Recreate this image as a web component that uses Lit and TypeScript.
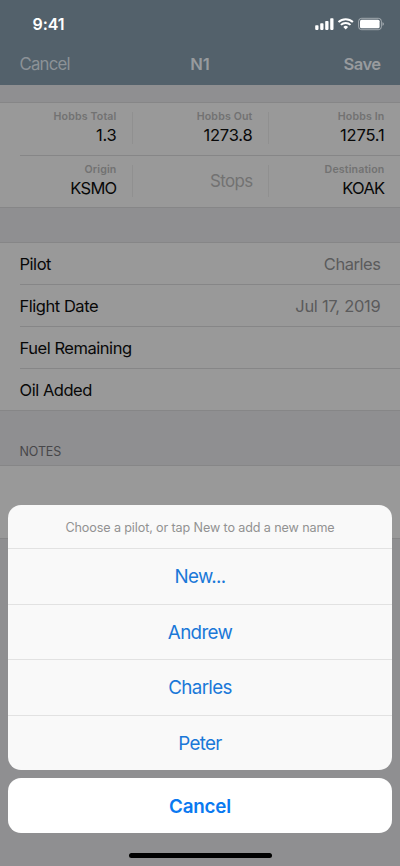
import { LitElement, html, css, svg } from "lit";
import { customElement } from "lit/decorators.js";

interface Field { label: string; value: string; cls: string }

const ROWS: Field[][] = [
  [
    { label: "Hobbs Total", value: "1.3", cls: "" },
    { label: "Hobbs Out", value: "1273.8", cls: "" },
    { label: "Hobbs In", value: "1275.1", cls: "" },
  ],
  [
    { label: "Origin", value: "KSMO", cls: "code" },
    { label: "", value: "Stops", cls: "" },
    { label: "Destination", value: "KOAK", cls: "code" },
  ],
];

const DETAILS = [
  { label: "Pilot", value: "Charles" },
  { label: "Flight Date", value: "Jul 17, 2019" },
  { label: "Fuel Remaining", value: "" },
  { label: "Oil Added", value: "" },
];

@customElement("status-bar")
class StatusBar extends LitElement {
  static styles = css`
    :host { display: flex; justify-content: space-between; height: 42px; color: #fff; }
    .time { margin: 13px 0 0 32.5px; font-size: 16px; line-height: 22px; font-weight: 600; letter-spacing: -0.1px; }
    svg { display: block; margin: 17px 15px 0 0; }
  `;
  render() {
    return html`
      <span class="time">9:41</span>
      <svg width="70" height="14" viewBox="0 0 70 14" fill="#fff">
        ${[[0, 8.2], [5, 6.2], [10, 4], [15, 1.3]].map(
          ([x, y]) => svg`<rect x=${x + 0.2} y=${y} width="3.3" height=${12.9 - y} rx="0.8" />`,
        )}
        <path d="M30.7 12.5L28.3 10a3.500 3.500 0 0 1 4.800 0z" />
        <path d="M25.900 7.900a6.900 6.900 0 0 1 9.600 0M23.500 5a10.500 10.500 0 0 1 14.400 0" fill="none" stroke="#fff" stroke-width="2" />
        <rect x="43.600" y="1.300" width="22.800" height="11.400" rx="3" fill="none" stroke="#fff" stroke-opacity=".45" />
        <rect x="45" y="2.800" width="19.600" height="8.400" rx="1.500" />
        <path d="M67.500 5.200c.9.300 1.300 1 1.300 1.800s-.4 1.500-1.300 1.800z" fill-opacity=".5" />
      </svg>
    `;
  }
}

@customElement("action-sheet")
class ActionSheet extends LitElement {
  static styles = css`
    :host { display: flex; flex-direction: column; align-items: center; gap: 8px; padding: 0 8px; }
    .group, .cancel { align-self: stretch; border-radius: 13px; box-sizing: border-box; }
    .group { height: 265px; background: #f9f9f9; display: flex; flex-direction: column; overflow: hidden; }
    .title { flex: 0 0 43px; box-sizing: border-box; padding-top: 2px; display: flex; align-items: center; justify-content: center; font-size: 12.600px; letter-spacing: -0.12px; color: #929292; }
    .option { flex: 1; border-top: 1px solid #e2e2e2; }
    .option, .cancel { display: flex; align-items: center; justify-content: center; font-size: 18.800px; line-height: 24px; padding-top: 2px; letter-spacing: -0.66px; color: #1a78d8; }
    .cancel { height: 55px; background: #fff; font-weight: 600; letter-spacing: -0.18px; color: #0a79f0; }
    .home { width: 143px; height: 5px; border-radius: 3px; background: #000; margin-top: 12px; }
  `;
  render() {
    return html`
      <div class="group">
        <div class="title">Choose a pilot, or tap New to add a new name</div>
        ${["New...", "Andrew", "Charles", "Peter"].map((n) => html`<div class="option">${n}</div>`)}
      </div>
      <div class="cancel">Cancel</div>
      <div class="home"></div>
    `;
  }
}

@customElement("app-root")
class AppRoot extends LitElement {
  static styles = css`
    :host { display: block; position: relative; height: 866px; overflow: hidden; background: #8f8f91; font-family: Inter, "Liberation Sans", sans-serif; color: #080808; }
    .header { height: 85px; background: #53616b; }
    .nav { display: grid; grid-template-columns: 1fr 1fr 1fr; padding: 0 19.500px; height: 43px; align-items: center; font-size: 16.800px; letter-spacing: -0.8px; color: #8c9297; }
    .strong { font-weight: 600; color: #989b9e; font-size: 16.600px; letter-spacing: 0; }
    .nav :nth-child(2) { text-align: center; }
    .nav :nth-child(3) { text-align: right; letter-spacing: -0.6px; }
    .card { background: #999; border: solid #868687; border-width: 1px 0; box-sizing: border-box; }
    .grid { margin-top: 17px; height: 106px; display: flex; flex-direction: column; }
    .row { flex: 0 0 51.500px; box-sizing: border-box; display: grid; grid-template-columns: 113px 136px 1fr; margin-left: 20px; }
    .row + .row { flex: 0 0 52.500px; border-top: 1px solid #868687; }
    .cell { display: flex; flex-direction: column; align-items: flex-end; justify-content: center; padding-right: 15.500px; border-right: 1px solid #909090; height: 32px; margin-top: 9px; }
    .cell:last-child { border: 0; }
    .label { font-size: 10.600px; line-height: 14px; font-weight: 600; letter-spacing: 0.15px; color: #727272; margin: 1px 0 -1px; }
    .value { font-size: 16.500px; line-height: 24px; letter-spacing: -0.2px; }
    .code { letter-spacing: -0.7px; }
    .faint { color: #727272; font-size: 16.900px; letter-spacing: -0.6px; }
    .details { margin-top: 34px; height: 169px; display: flex; flex-direction: column; }
    .item { flex: 1; display: flex; justify-content: space-between; align-items: center; margin-left: 19.500px; padding-right: 19.500px; font-size: 16.500px; letter-spacing: -0.46px; }
    .item + .item { border-top: 1px solid #868687; }
    .item .v { color: #5b5b5c; }
    .item .date { letter-spacing: -0.28px; }
    .heading { height: 54px; box-sizing: border-box; padding: 32px 0 0 19.500px; font-size: 12.500px; line-height: 18px; color: #47474a; letter-spacing: -0.1px; }
    .notes { height: 74px; }
    .sheet { position: absolute; left: 0; right: 0; top: 505px; }
  `;
  render() {
    return html`
      <div class="header">
        <status-bar></status-bar>
        <div class="nav">
          <span>Cancel</span><span class="strong">N1</span><span class="strong">Save</span>
        </div>
      </div>
      <div class="card grid">
        ${ROWS.map((row) => html`<div class="row">${row.map((f) => html`
          <div class="cell">
            ${f.label ? html`<span class="label">${f.label}</span>` : null}
            <span class="value ${f.label ? f.cls : "faint"}">${f.value}</span>
          </div>`)}</div>`)}
      </div>
      <div class="card details">
        ${DETAILS.map((d) => html`<div class="item"><span>${d.label}</span><span class="v ${/\d/.test(d.value) ? "date" : ""}">${d.value}</span></div>`)}
      </div>
      <div class="heading">NOTES</div>
      <div class="card notes"></div>
      <action-sheet class="sheet"></action-sheet>
    `;
  }
}
